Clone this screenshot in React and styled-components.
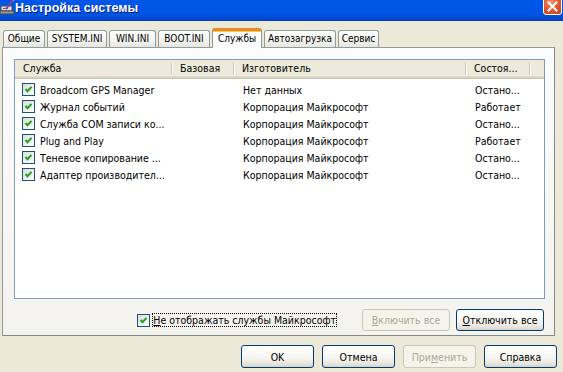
import React from 'react'
import styled, { createGlobalStyle } from 'styled-components'

const services = [
  { name: 'Broadcom GPS Manager', vendor: 'Нет данных', state: 'Остано...' },
  { name: 'Журнал событий', vendor: 'Корпорация Майкрософт', state: 'Работает' },
  { name: 'Служба COM записи ко...', vendor: 'Корпорация Майкрософт', state: 'Остано...' },
  { name: 'Plug and Play', vendor: 'Корпорация Майкрософт', state: 'Работает' },
  { name: 'Теневое копирование ...', vendor: 'Корпорация Майкрософт', state: 'Остано...' },
  { name: 'Адаптер производител...', vendor: 'Корпорация Майкрософт', state: 'Остано...' },
]

const tabs = [
  { label: 'Общие', width: 42 },
  { label: 'SYSTEM.INI', width: 60 },
  { label: 'WIN.INI', width: 47 },
  { label: 'BOOT.INI', width: 52 },
  { label: 'Службы', width: 50 },
  { label: 'Автозагрузка', width: 72 },
  { label: 'Сервис', width: 41 },
]

export default function App() {
  return (
    <StyledWindow>
      <GlobalStyle />
      <StyledTitleBar>
        <AppIcon />
        <StyledTitle>Настройка системы</StyledTitle>
        <StyledClose>
          <svg width="11" height="11" viewBox="0 0 11 11">
            <path d="M1.5 1.5 L9.5 9.5 M9.5 1.5 L1.5 9.5" stroke="#fff" strokeWidth="2" strokeLinecap="square" />
          </svg>
        </StyledClose>
      </StyledTitleBar>

      <StyledBody>
        <StyledTabStrip>
          {tabs.map((t) => (
            <StyledTab
              key={t.label}
              $width={t.width}
              className={t.label === 'Службы' ? 'active' : ''}
            >
              {t.label}
            </StyledTab>
          ))}
        </StyledTabStrip>

        <StyledPanel>
          <StyledList>
            <StyledHeader>
              <StyledHeaderCell>Служба</StyledHeaderCell>
              <StyledHeaderCell>Базовая</StyledHeaderCell>
              <StyledHeaderCell>Изготовитель</StyledHeaderCell>
              <StyledHeaderCell>Состоя...</StyledHeaderCell>
            </StyledHeader>
            <StyledRows>
              {services.map((s) => (
                <StyledRow key={s.name}>
                  <StyledNameCell>
                    <CheckBox />
                    <span>{s.name}</span>
                  </StyledNameCell>
                  <span />
                  <StyledCell>{s.vendor}</StyledCell>
                  <StyledCell>{s.state}</StyledCell>
                </StyledRow>
              ))}
            </StyledRows>
          </StyledList>

          <StyledActions>
            <StyledHideOption>
              <CheckBox />
              <StyledFocusLabel>
                <u>Н</u>е отображать службы Майкрософт
              </StyledFocusLabel>
            </StyledHideOption>
            <StyledButton $width={88} disabled>
              <u>В</u>ключить все
            </StyledButton>
            <StyledButton $width={88}>
              <u>О</u>тключить все
            </StyledButton>
          </StyledActions>
        </StyledPanel>

        <StyledFooter>
          <StyledButton $width={73} $height={23}>OK</StyledButton>
          <StyledButton $width={73} $height={23}>Отмена</StyledButton>
          <StyledButton $width={73} $height={23} disabled>
            При<u>м</u>енить
          </StyledButton>
          <StyledButton $width={73} $height={23}>Справка</StyledButton>
        </StyledFooter>
      </StyledBody>
    </StyledWindow>
  )
}

function CheckBox() {
  return (
    <StyledCheck>
      <svg width="11" height="11" viewBox="0 0 11 11">
        <polyline points="2.5,5 4.5,7.2 8.5,2.8" fill="none" stroke="#21a121" strokeWidth="2" />
      </svg>
    </StyledCheck>
  )
}

function AppIcon() {
  return (
    <svg width="16" height="15" viewBox="0 0 16 15">
      <rect x="1" y="6" width="11" height="5" fill="#d8d8d8" stroke="#555" strokeWidth="1" />
      <rect x="0" y="11" width="14" height="3" fill="#9a9a9a" stroke="#444" strokeWidth="1" />
      <rect x="3" y="8" width="5" height="1" fill="#666" />
      <path d="M6 9 L13 0" stroke="#8a3fa8" strokeWidth="2" />
      <path d="M13 0 L14.5 -1" stroke="#f0c0f0" strokeWidth="2" />
    </svg>
  )
}

const GlobalStyle = createGlobalStyle`
  html, body {
    margin: 0;
    padding: 0;
    background: #ece9d8;
  }
  body {
    font-family: "DejaVu Sans Condensed", "Liberation Sans", sans-serif;
    font-size: 10.5px;
    color: #000;
  }
`

const StyledWindow = styled.div`
  width: 563px;
  height: 372px;
  display: flex;
  flex-direction: column;
  overflow: hidden;
  background: #ece9d8;
`

const StyledTitleBar = styled.div`
  height: 21px;
  flex: none;
  display: flex;
  align-items: flex-start;
  background: linear-gradient(#0057e7 0%, #0055e5 65%, #0049d2 90%, #003fb8 100%);
`

const StyledTitle = styled.div`
  margin-left: -1px;
  font-family: "Liberation Sans", sans-serif;
  font-weight: bold;
  font-size: 12.5px;
  line-height: 17px;
  color: #fff;
  text-shadow: 1px 1px #0a1a7a;
`

const StyledClose = styled.div`
  margin-left: auto;
  margin-right: 1px;
  margin-top: -5px;
  width: 19px;
  height: 20px;
  display: flex;
  align-items: center;
  justify-content: center;
  padding-top: 3px;
  box-sizing: border-box;
  border: 1px solid #fff;
  border-radius: 3px;
  background: radial-gradient(circle at 40% 35%, #f09a78 0%, #e35c33 45%, #c93d16 100%);
`

const StyledBody = styled.div`
  flex: 1;
  display: flex;
  flex-direction: column;
  padding: 7px 8px 0 2px;
`

const StyledTabStrip = styled.div`
  display: flex;
  align-items: flex-end;
  gap: 2px;
  height: 20px;
  padding-left: 1px;
  margin-bottom: -1px;
  position: relative;
  z-index: 1;
`

const StyledTab = styled.div`
  width: ${(p) => p.$width}px;
  height: 17px;
  margin-bottom: 1px;
  box-sizing: border-box;
  font-size: 10px;
  line-height: 16px;
  text-align: center;
  border: 1px solid #919b9c;
  border-bottom: none;
  border-radius: 3px 3px 0 0;
  background: linear-gradient(#ffffff, #f3f3ef 60%, #e6e5de);
  white-space: nowrap;

  &.active {
    height: 20px;
    margin-bottom: 0;
    line-height: 16px;
    background: #fcfcfe;
    border-top: 3px solid #e68b2c;
    box-shadow: inset 0 1px #ffc83c;
  }
`

const StyledPanel = styled.div`
  height: 289px;
  box-sizing: border-box;
  border: 1px solid #919b9c;
  border-right-color: #7f8a8b;
  border-bottom-color: #7f8a8b;
  background: linear-gradient(#fcfcfe, #f4f3ee);
  padding: 11px 9px 0 11px;
  display: flex;
  flex-direction: column;
`

const StyledList = styled.div`
  height: 240px;
  box-sizing: border-box;
  border: 1px solid #7f9db9;
  background: #fff;
`

const columns = '157px 62px 232px 64px 1fr'

const StyledHeader = styled.div`
  display: grid;
  grid-template-columns: ${columns};
  height: 19px;
  background: #ebeadb;
  box-shadow: inset 0 -1px #cbc7b8, inset 0 -2px #d6d2c2, inset 0 -3px #e2decd;
`

const StyledHeaderCell = styled.div`
  position: relative;
  padding-left: 8px;
  line-height: 17px;
  white-space: nowrap;

  &::after {
    content: '';
    position: absolute;
    right: 0;
    top: 3px;
    bottom: 5px;
    width: 1px;
    background: #c7c5b2;
    box-shadow: 1px 0 #fff;
  }
`

const StyledRows = styled.div`
  padding-top: 2px;
`

const StyledRow = styled.div`
  display: grid;
  grid-template-columns: ${columns};
  height: 17px;
  align-items: center;
  white-space: nowrap;
`

const StyledNameCell = styled.div`
  display: flex;
  align-items: center;
  gap: 5px;
  padding-left: 7px;
`

const StyledCell = styled.div`
  padding-left: 9px;
`

const StyledCheck = styled.span`
  width: 13px;
  height: 13px;
  flex: none;
  box-sizing: border-box;
  border: 1px solid #1c5180;
  background: linear-gradient(135deg, #dcdcd7, #ffffff);
  display: flex;
  align-items: center;
  justify-content: center;
`

const StyledActions = styled.div`
  display: flex;
  align-items: center;
  justify-content: flex-end;
  gap: 6px;
  margin-top: 10px;
  padding-right: 1px;
`

const StyledHideOption = styled.div`
  display: flex;
  align-items: center;
  gap: 2px;
  margin-right: 19px;
`

const StyledFocusLabel = styled.span`
  padding: 1px 1px;
  outline: 1px dotted #000;
  outline-offset: -1px;
  white-space: nowrap;
`

const StyledButton = styled.button`
  width: ${(p) => p.$width}px;
  height: ${(p) => p.$height || 22}px;
  padding: 0;
  font: inherit;
  color: #000;
  border: 1px solid #003c74;
  border-radius: 3px;
  background: linear-gradient(#ffffff, #f5f4f0 60%, #e3e1d6 90%, #d6d0c5);
  white-space: nowrap;

  &:disabled {
    color: #aca899;
    border-color: #c9c7ba;
    background: #f5f4ea;
  }
`

const StyledFooter = styled.div`
  display: flex;
  justify-content: flex-end;
  gap: 8px;
  margin-top: 9px;
  margin-right: -2px;
`
